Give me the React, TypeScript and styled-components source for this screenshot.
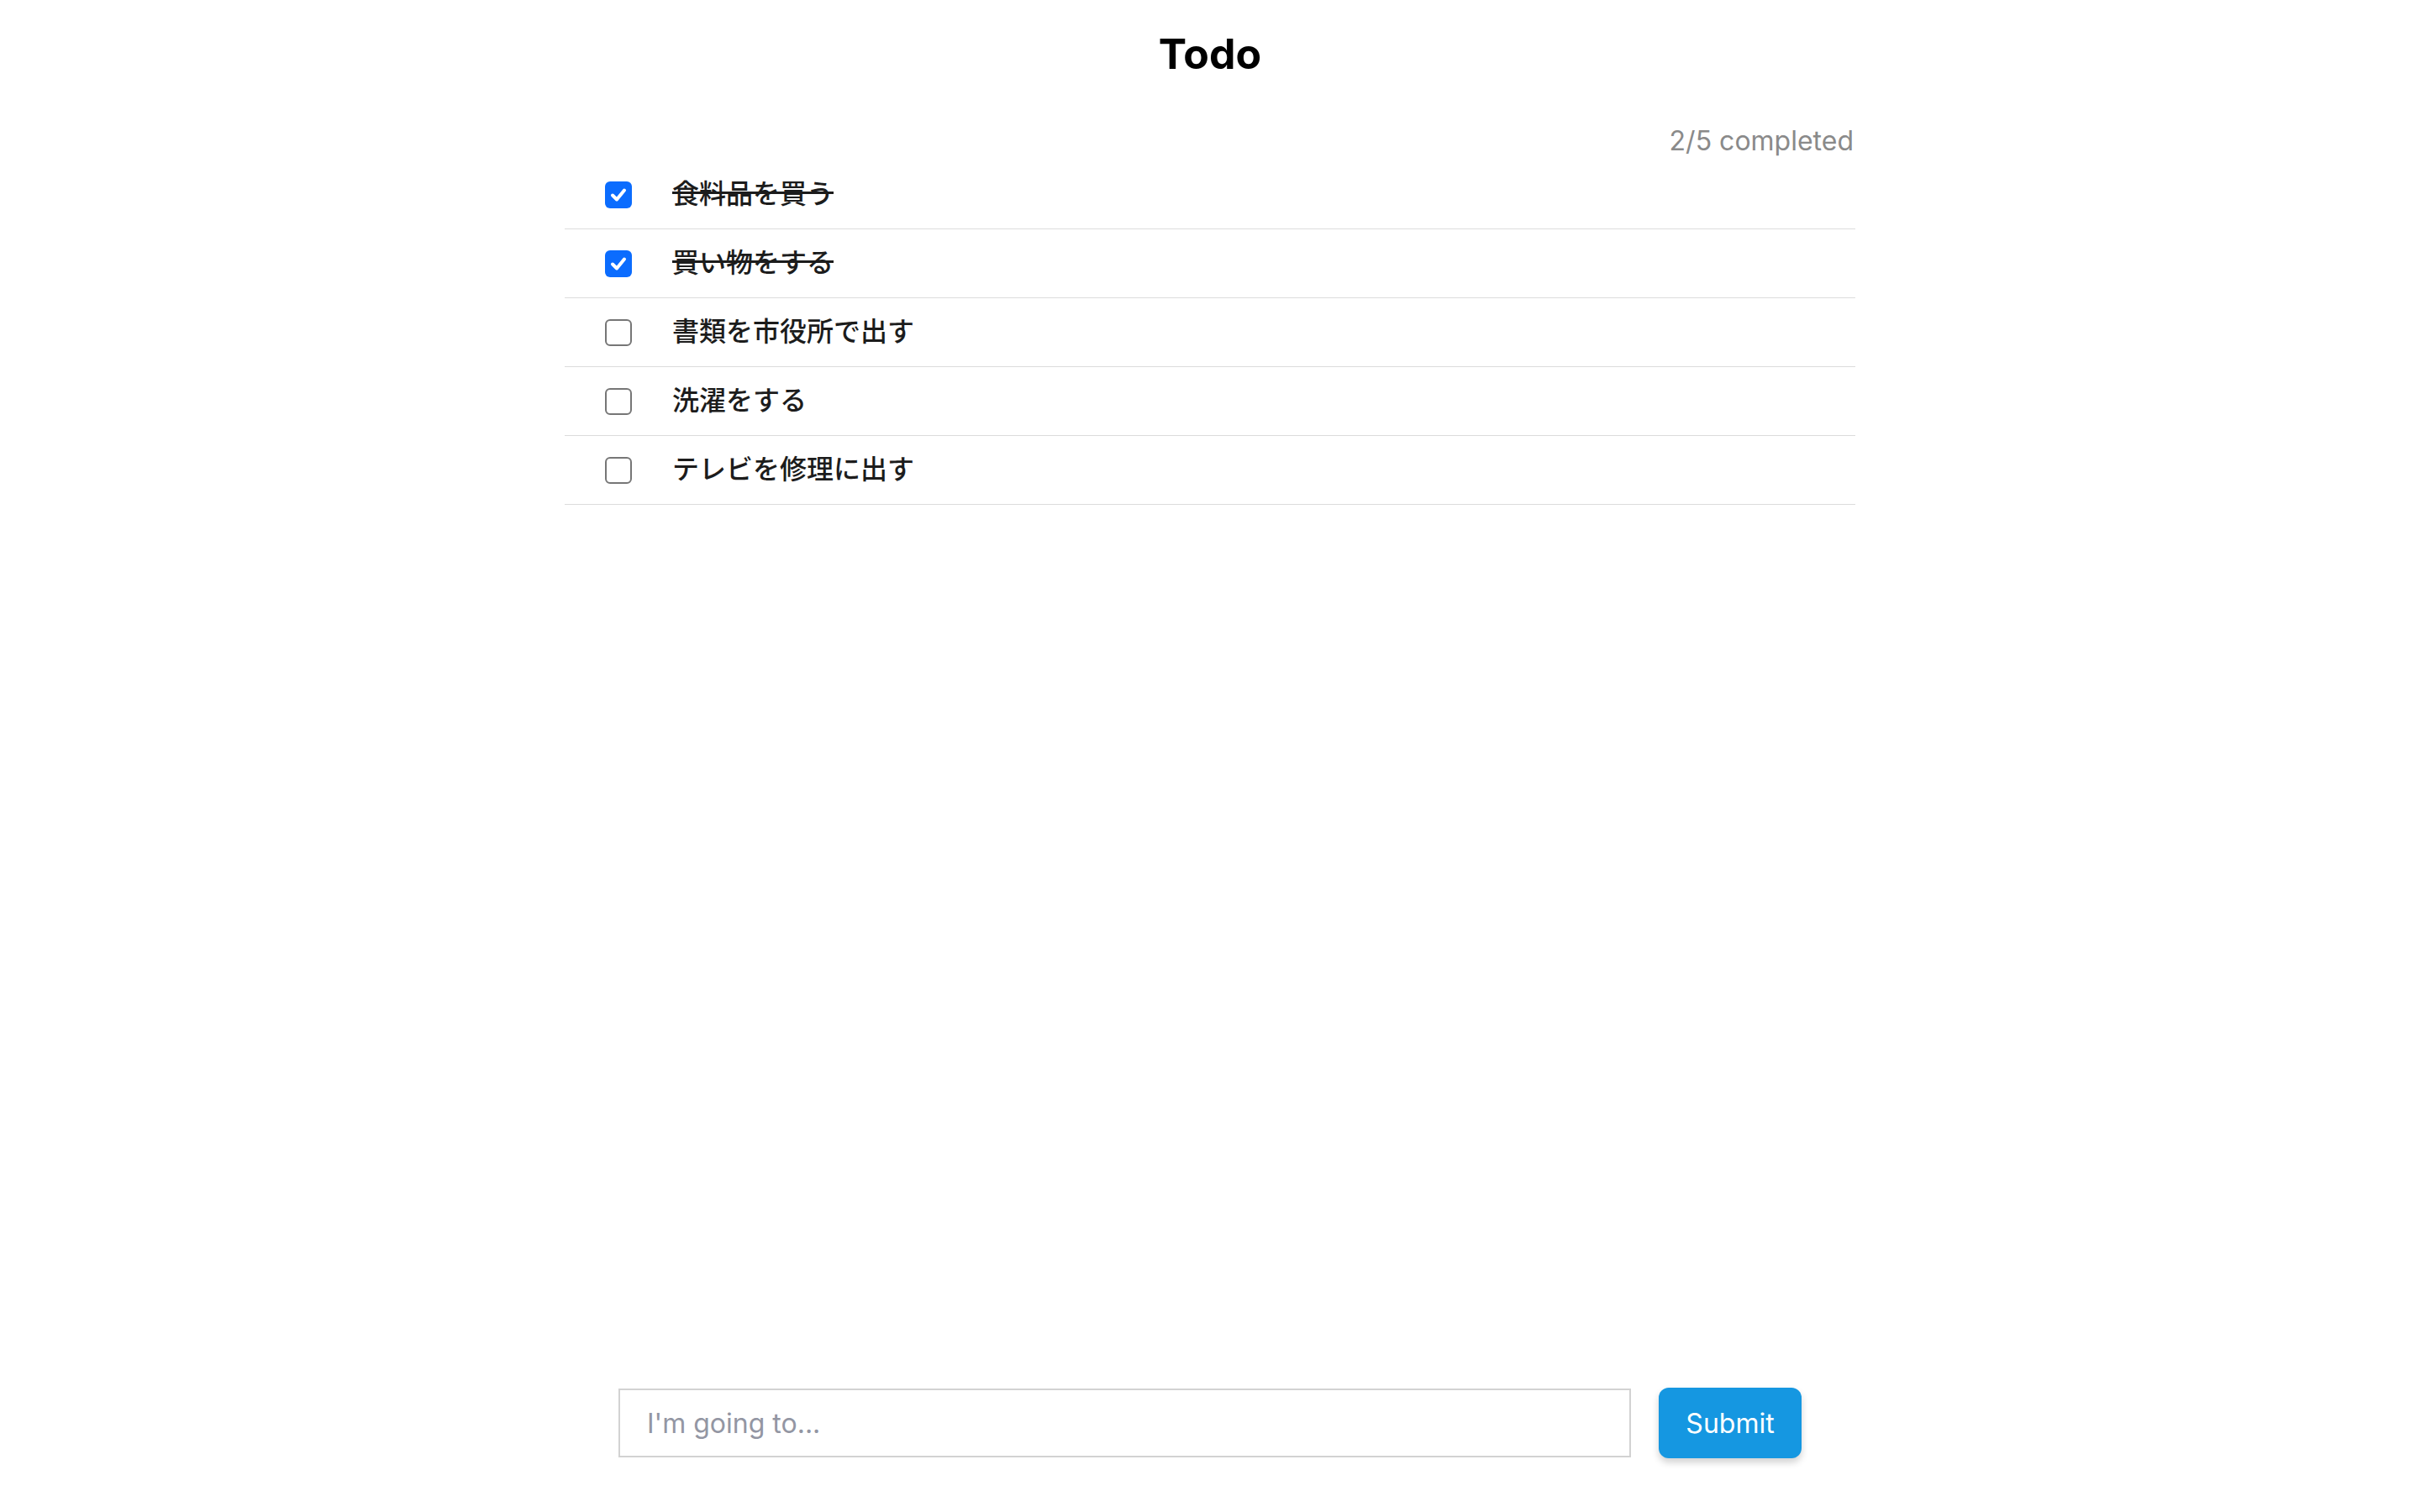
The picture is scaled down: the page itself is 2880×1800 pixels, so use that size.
import React, {useState} from 'react';
import styled, {createGlobalStyle} from 'styled-components';

const GlobalStyle = createGlobalStyle`
  html, body {
    margin: 0;
    padding: 0;
    background: #ffffff;
  }
  body {
    font-family: Inter, "Noto Sans", "Noto Sans CJK JP", sans-serif;
    color: #1c1c1c;
  }
  input::placeholder {
    color: #9396a3;
  }
`;

interface ITodo {
    id: number,
    title: string,
    done: boolean,
}

const initialTodos: ITodo[] = [
    {id: 1, title: '食料品を買う', done: true},
    {id: 2, title: '買い物をする', done: true},
    {id: 3, title: '書類を市役所で出す', done: false},
    {id: 4, title: '洗濯をする', done: false},
    {id: 5, title: 'テレビを修理に出す', done: false},
];

const Page = styled.div`
    min-height: 100vh;
    display: flex;
    flex-direction: column;
    align-items: center;
    box-sizing: border-box;
    padding-bottom: 64px;
`;

const Title = styled.h1`
    margin: 34px 0 0 0;
    font-family: Inter, "Liberation Sans", sans-serif;
    font-size: 50px;
    line-height: 60px;
    font-weight: 700;
    color: #000000;
`;

const Main = styled.main`
    width: 1536px;
    display: flex;
    flex-direction: column;
`;

const Counter = styled.div`
    margin-top: 54px;
    margin-bottom: 3px;
    padding-right: 2px;
    text-align: right;
    font-size: 32px;
    line-height: 40px;
    color: #8a8a8a;
`;

const List = styled.ul`
    list-style: none;
    margin: 0;
    padding: 0;
`;

const Row = styled.li`
    height: 81px;
    border-bottom: 1px solid #dcdcdc;
    padding-left: 48px;
    display: flex;
    align-items: center;
    gap: 48px;
    cursor: pointer;
`;

const Box = styled.span<{ $checked: boolean }>`
    width: 32px;
    height: 32px;
    box-sizing: border-box;
    border-radius: 6px;
    flex-shrink: 0;
    display: flex;
    align-items: center;
    justify-content: center;
    background: ${p => p.$checked ? '#0b6cfe' : '#ffffff'};
    border: ${p => p.$checked ? 'none' : '2px solid #767676'};
`;

const Label = styled.span<{ $done: boolean }>`
    font-family: "Noto Sans CJK JP", sans-serif;
    font-size: 32px;
    font-weight: 500;
    line-height: 40px;
    padding-bottom: 8px;
    color: #1c1c1c;
    text-decoration: ${p => p.$done ? 'line-through' : 'none'};
    text-decoration-thickness: 3px;
`;

const Form = styled.form`
    margin-top: auto;
    width: 1408px;
    display: flex;
    gap: 33px;
`;

const Input = styled.input`
    flex: 1;
    height: 82px;
    box-sizing: border-box;
    border: 2px solid #d2d2d2;
    padding: 0 32px;
    font-family: Inter, sans-serif;
    font-size: 32px;
    color: #1c1c1c;
    background: #ffffff;
    outline: none;
`;

const Button = styled.button`
    width: 170px;
    height: 84px;
    margin-top: -1px;
    border: none;
    border-radius: 12px;
    background: #1597e1;
    color: #ffffff;
    font-family: Inter, sans-serif;
    font-size: 32px;
    box-shadow: 0 5px 8px rgba(0, 0, 0, 0.18);
    cursor: pointer;
`;

const Check = () => (
    <svg width="22" height="22" viewBox="0 0 22 22">
        <path d="M4 11.5 L9 16.5 L18 5.5" fill="none" stroke="#ffffff" strokeWidth="4"
              strokeLinecap="round" strokeLinejoin="round"/>
    </svg>
);

const App = () => {
    const [todos, setTodos] = useState<ITodo[]>(initialTodos);
    const [text, setText] = useState('');

    const toggle = (id: number) => {
        setTodos(todos.map(t => t.id === id ? {...t, done: !t.done} : t));
    }

    const handleSubmit = (e: React.FormEvent) => {
        e.preventDefault();
        if (!text.trim()) return;
        setTodos([...todos, {id: Date.now(), title: text, done: false}]);
        setText('');
    }

    const doneCount = todos.filter(t => t.done).length;

    return (
        <Page>
            <GlobalStyle/>
            <Title>Todo</Title>
            <Main>
                <Counter>{doneCount}/{todos.length} completed</Counter>
                <List>
                    {todos.map(t => (
                        <Row key={t.id} onClick={() => toggle(t.id)}>
                            <Box $checked={t.done}>{t.done && <Check/>}</Box>
                            <Label $done={t.done}>{t.title}</Label>
                        </Row>
                    ))}
                </List>
            </Main>
            <Form onSubmit={handleSubmit}>
                <Input placeholder="I'm going to..." value={text} onChange={e => setText(e.target.value)}/>
                <Button type="submit">Submit</Button>
            </Form>
        </Page>
    )
}

export default App
